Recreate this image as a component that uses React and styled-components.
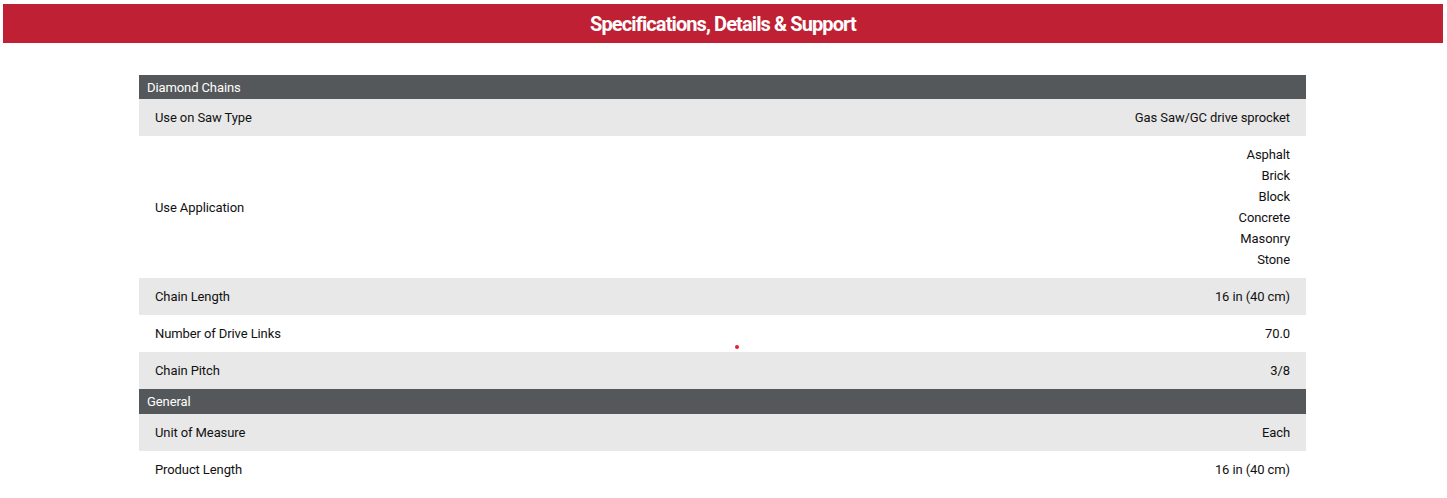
import React from "react";
import styled, { createGlobalStyle } from "styled-components";

const Global = createGlobalStyle`
  html, body { margin: 0; padding: 0; background: #fff; }
  body { font-family: Roboto, "Noto Sans", sans-serif; }
`;

const Page = styled.div`
  position: relative;
  padding: 4px 4px 0 3px;
`;

const Banner = styled.h2`
  margin: 0;
  height: 39px;
  background: #bf2033;
  color: #fff;
  display: flex;
  align-items: center;
  justify-content: center;
  font-family: Roboto, "Noto Sans", sans-serif;
  font-weight: 700;
  font-size: 20px;
  letter-spacing: -0.9px;
`;

const Table = styled.div`
  width: 1167px;
  margin: 32px 0 0 136px;
  font-size: 13px;
  letter-spacing: -0.1px;
  color: #111;
`;

const Section = styled.div`
  background: #55585a;
  color: #fff;
  height: ${(p) => p.$h}px;
  padding: 0 8px;
  display: flex;
  align-items: center;
`;

const Row = styled.div`
  display: flex;
  justify-content: space-between;
  align-items: center;
  padding: 8px 16px;
  background: ${(p) => (p.$alt ? "#e8e8e8" : "#fff")};
  line-height: 21px;
`;

const Label = styled.span``;

const Value = styled.div`
  display: flex;
  flex-direction: column;
  align-items: flex-end;
  text-align: right;
`;

const Dot = styled.span`
  position: absolute;
  left: 735px;
  top: 345px;
  width: 4px;
  height: 4px;
  border-radius: 50%;
  background: #e3222b;
`;

const groups = [
  {
    title: "Diamond Chains",
    h: 24,
    rows: [
      ["Use on Saw Type", ["Gas Saw/GC drive sprocket"]],
      ["Use Application", ["Asphalt", "Brick", "Block", "Concrete", "Masonry", "Stone"]],
      ["Chain Length", ["16 in (40 cm)"]],
      ["Number of Drive Links", ["70.0"]],
      ["Chain Pitch", ["3/8"]],
    ],
  },
  {
    title: "General",
    h: 25,
    rows: [
      ["Unit of Measure", ["Each"]],
      ["Product Length", ["16 in (40 cm)"]],
    ],
  },
];

export default function App() {
  return (
    <Page>
      <Global />
      <Banner>Specifications, Details &amp; Support</Banner>
      <Table>
        {groups.map((g) => (
          <React.Fragment key={g.title}>
            <Section $h={g.h}>{g.title}</Section>
            {g.rows.map(([label, vals], i) => (
              <Row key={label} $alt={i % 2 === 0}>
                <Label>{label}</Label>
                <Value>
                  {vals.map((v) => (
                    <span key={v}>{v}</span>
                  ))}
                </Value>
              </Row>
            ))}
          </React.Fragment>
        ))}
      </Table>
      <Dot />
    </Page>
  );
}
